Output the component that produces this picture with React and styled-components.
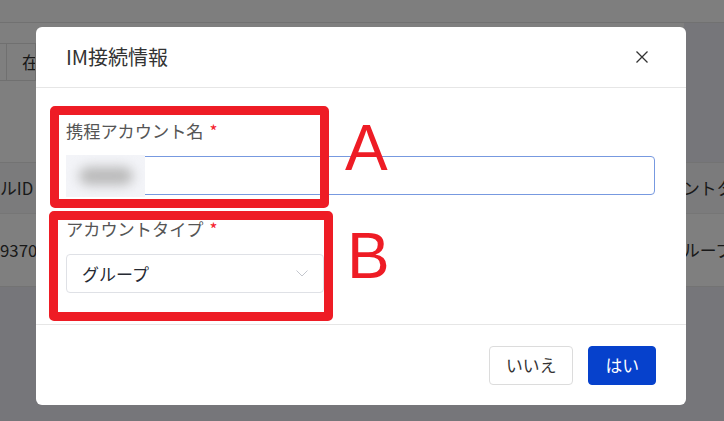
import React from 'react';
import styled, { createGlobalStyle } from 'styled-components';

const GlobalStyle = createGlobalStyle`
    html, body {
        margin: 0;
        padding: 0;
    }
    body {
        width: 724px;
        height: 421px;
        overflow: hidden;
        font-family: "Noto Sans CJK JP", "Noto Sans", sans-serif;
        background: #ecedf5;
    }
    * {
        box-sizing: border-box;
    }
`;

const App = () => {
    return (
        <>
            <GlobalStyle />
            <Page>
                <TopBar />
                <FilterCard>
                    <FilterBar>
                        <FilterCell $width={7} />
                        <FilterCell $width={29} $pad={15}>在籍状態</FilterCell>
                    </FilterBar>
                </FilterCard>
                <Table>
                    <HeaderRow>
                        <Cell>ルID</Cell>
                        <Cell $right>ントタイプ</Cell>
                    </HeaderRow>
                    <DataRow>
                        <Cell>9370</Cell>
                        <Cell $right>ループ</Cell>
                    </DataRow>
                </Table>
            </Page>

            <Overlay>
                <Modal>
                    <ModalHeader>
                        <Title>IM接続情報</Title>
                        <CloseButton aria-label="close">
                            <svg width="12" height="12" viewBox="0 0 12 12">
                                <path d="M0.5 0.5 L11.5 11.5 M11.5 0.5 L0.5 11.5" stroke="#333" strokeWidth="1.3" fill="none" />
                            </svg>
                        </CloseButton>
                    </ModalHeader>

                    <ModalBody>
                        <Field $gap={22}>
                            <Label>携程アカウント名<Required>*</Required></Label>
                            <InputWrap>
                                <TextInput type="text" defaultValue="" />
                                <Masked><MaskBlob /></Masked>
                            </InputWrap>
                        </Field>
                        <Field $gap={0}>
                            <Label>アカウントタイプ<Required>*</Required></Label>
                            <Select>
                                <span>グループ</span>
                                <svg width="12" height="7" viewBox="0 0 12 7">
                                    <path d="M0.5 0.5 L6 6 L11.5 0.5" stroke="#c4c7ce" strokeWidth="1" fill="none" />
                                </svg>
                            </Select>
                        </Field>
                    </ModalBody>

                    <ModalFooter>
                        <Button>いいえ</Button>
                        <Button $primary>はい</Button>
                    </ModalFooter>

                    {/* red annotation marks */}
                    <Mark $left={14} $top={79} $width={279} $height={102} />
                    <Mark $left={13} $top={184} $width={284} $height={110} />
                    <MarkLetter $left={309} $top={89}>A</MarkLetter>
                    <MarkLetter $left={311} $top={197}>B</MarkLetter>
                </Modal>
            </Overlay>
        </>
    );
};

export default App;

// Page underneath
const Page = styled.div`
    width: 724px;
    height: 421px;
    display: flex;
    flex-direction: column;
    background: #ecedf5;
    color: #333;
    font-size: 16.8px;
`;

const TopBar = styled.div`
    height: 23px;
    background: #fcfcfc;
    border-bottom: 1px solid #e2e2e2;
`;

const FilterCard = styled.div`
    height: 139px;
    width: 684px;
    padding-top: 20px;
    background: #ffffff;
`;

const FilterBar = styled.div`
    display: flex;
    height: 38px;
    border-top: 1px solid #e0e0e0;
    border-bottom: 1px solid #e0e0e0;
`;

const FilterCell = styled.div`
    width: ${p => (p.$width ? `${p.$width}px` : 'auto')};
    padding-left: ${p => p.$pad || 0}px;
    display: flex;
    align-items: center;
    overflow: hidden;
    border-right: 1px solid #e0e0e0;
    white-space: nowrap;
`;

const Table = styled.div`
    display: flex;
    flex-direction: column;
`;

const HeaderRow = styled.div`
    height: 51px;
    display: flex;
    justify-content: space-between;
    align-items: center;
    background: #f6f6f8;
    border-top: 1px solid #e6e6e6;
`;

const DataRow = styled.div`
    height: 74px;
    display: flex;
    justify-content: space-between;
    align-items: center;
    background: #ffffff;
    border-top: 1px solid #ececec;
    border-bottom: 1px solid #e6e6e6;
`;

const Cell = styled.div`
    white-space: nowrap;
    overflow: hidden;
    width: ${p => (p.$right ? '41px' : 'auto')};
`;

// Dialog
const Overlay = styled.div`
    position: fixed;
    inset: 0;
    background: rgba(0, 0, 0, 0.5);
    padding: 27px 0 0 36px;
`;

const Modal = styled.div`
    position: relative;
    width: 650px;
    background: #ffffff;
    border-radius: 6px;
`;

const ModalHeader = styled.div`
    height: 61px;
    display: flex;
    align-items: center;
    justify-content: space-between;
    padding: 0 38px 1px 30px;
    border-bottom: 1px solid #e6e6e6;
`;

const Title = styled.div`
    font-size: 20px;
    color: #333;
`;

const CloseButton = styled.button`
    width: 12px;
    height: 12px;
    padding: 0;
    border: none;
    background: none;
    display: flex;
    cursor: pointer;
`;

const ModalBody = styled.div`
    padding: 31px 31px 31px 30px;
`;

const Field = styled.div`
    display: flex;
    flex-direction: column;
    margin-bottom: ${p => p.$gap}px;
`;

const Label = styled.div`
    height: 24px;
    line-height: 24px;
    margin-bottom: 13px;
    font-size: 17.2px;
    color: #555;
    white-space: nowrap;
`;

const Required = styled.span`
    color: #f5222d;
    margin-left: 6px;
`;

const InputWrap = styled.div`
    position: relative;
`;

const TextInput = styled.input`
    width: 100%;
    height: 39px;
    border: 1px solid #7799e0;
    border-radius: 4px;
    outline: none;
    font-size: 16.8px;
    padding: 0 14px;
`;

const Masked = styled.div`
    position: absolute;
    left: 0;
    top: -1px;
    width: 79px;
    height: 42px;
    background: #f3f4f8;
    overflow: hidden;
    display: flex;
    align-items: center;
    justify-content: center;
`;

const MaskBlob = styled.div`
    width: 54px;
    height: 18px;
    border-radius: 9px;
    background: #b9b9b9;
    filter: blur(6px);
`;

const Select = styled.div`
    width: 258px;
    height: 39px;
    border: 1px solid #dfe1e6;
    border-radius: 4px;
    display: flex;
    align-items: center;
    justify-content: space-between;
    padding: 0 15px 0 15px;
    font-size: 17px;
    color: #262a33;
`;

const ModalFooter = styled.div`
    height: 81px;
    display: flex;
    align-items: center;
    justify-content: flex-end;
    gap: 15px;
    padding: 0 30px;
    border-top: 1px solid #e6e6e6;
`;

const Button = styled.button`
    height: 39px;
    padding: 0 16px;
    border-radius: 4px;
    border: 1px solid ${p => (p.$primary ? '#0641cc' : '#dcdcdc')};
    background: ${p => (p.$primary ? '#0641cc' : '#ffffff')};
    color: ${p => (p.$primary ? '#ffffff' : '#333')};
    font-family: inherit;
    font-size: 16.8px;
    cursor: pointer;
`;

const Mark = styled.div`
    position: absolute;
    left: ${p => p.$left}px;
    top: ${p => p.$top}px;
    width: ${p => p.$width}px;
    height: ${p => p.$height}px;
    border: 9px solid #ee1c25;
    border-radius: 5px;
    pointer-events: none;
`;

const MarkLetter = styled.div`
    position: absolute;
    left: ${p => p.$left}px;
    top: ${p => p.$top}px;
    font-family: "Liberation Sans", Arial, sans-serif;
    font-size: 64px;
    line-height: 1;
    color: #ee1c25;
    pointer-events: none;
`;
